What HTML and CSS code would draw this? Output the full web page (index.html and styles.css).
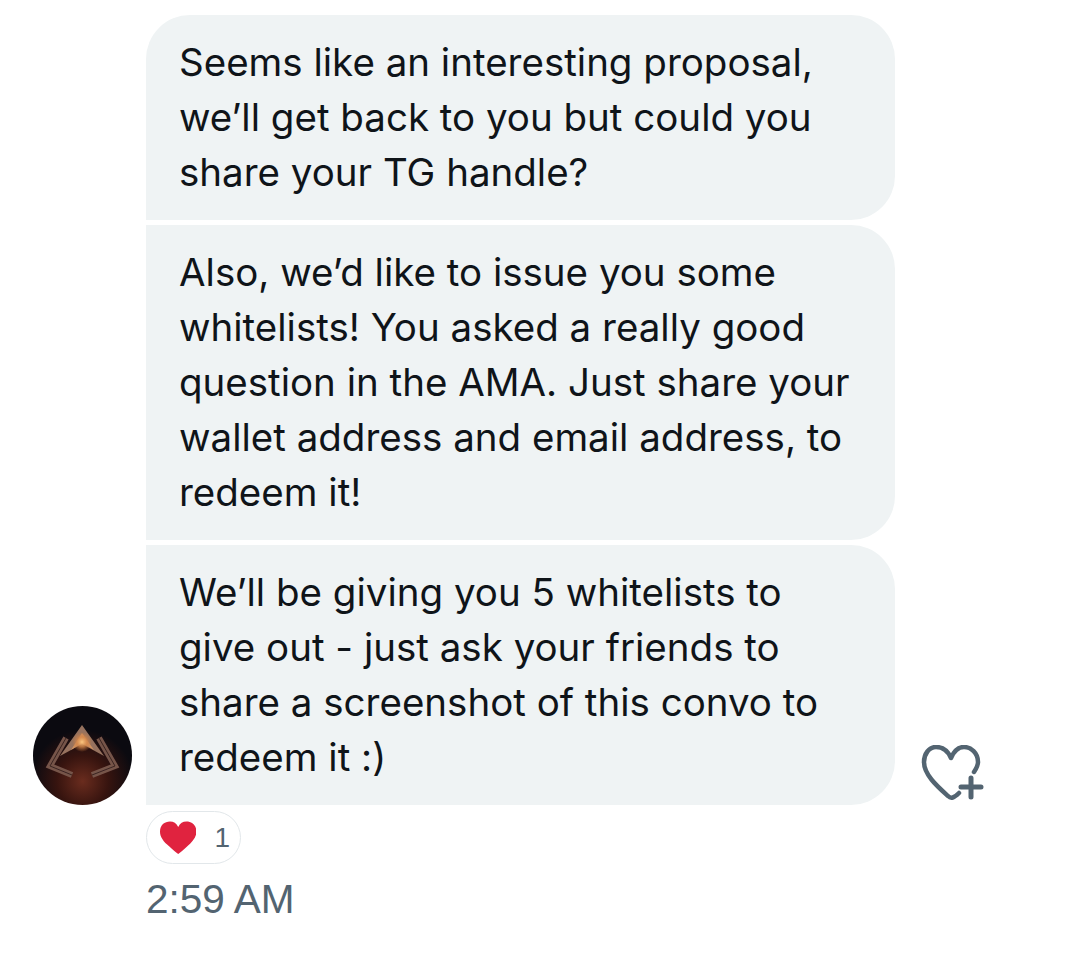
FILE: index.html
```html
<!DOCTYPE html>
<html lang="en">
<head>
    <meta charset="UTF-8">
    <title>Messages</title>
    <link rel="stylesheet" href="styles.css">
</head>
<body>
    <div class="thread">
        <div class="thread__row">
            <svg class="avatar" viewBox="0 0 99 99" aria-hidden="true">
                <defs>
                    <radialGradient id="glow" cx="50%" cy="76%" r="52%">
                        <stop offset="0" stop-color="#6a2c1e"/>
                        <stop offset="0.5" stop-color="#37140f"/>
                        <stop offset="1" stop-color="#0b0a10"/>
                    </radialGradient>
                    <radialGradient id="flare" cx="50%" cy="50%" r="50%">
                        <stop offset="0" stop-color="#fbc680"/>
                        <stop offset="0.5" stop-color="#d5874a" stop-opacity="0.8"/>
                        <stop offset="1" stop-color="#c9793f" stop-opacity="0"/>
                    </radialGradient>
                    <filter id="soft"><feGaussianBlur stdDeviation="0.6"/></filter>
                </defs>
                <circle cx="49.5" cy="49.5" r="49.5" fill="url(#glow)"/>
                <g filter="url(#soft)">
                    <path d="M33 32 L17 60 L39 69" fill="none" stroke="#76544a" stroke-width="6"/>
                    <path d="M66 32 L82 60 L59 69" fill="none" stroke="#76544a" stroke-width="6"/>
                    <path d="M33 32 L17 60 L39 69 M66 32 L82 60 L59 69" fill="none" stroke="#3a2420" stroke-width="1"/>
                    <path d="M49 19 L71 50 L49 38 L27 50 Z" fill="#96725e"/>
                    <path d="M49 27 L61 44 L49 37 L38 44 Z" fill="#cf9160"/>
                    <circle cx="49" cy="36" r="10" fill="url(#flare)"/>
                </g>
            </svg>

            <div class="bubbles">
                <div class="bubble bubble--first">Seems like an interesting proposal,<br>we’ll get back to you but could you<br>share your TG handle?</div>
                <div class="bubble">Also, we’d like to issue you some<br>whitelists! You asked a really good<br>question in the AMA. Just share your<br>wallet address and email address, to<br>redeem it!</div>
                <div class="bubble">We’ll be giving you 5 whitelists to<br>give out - just ask your friends to<br>share a screenshot of this convo to<br>redeem it :)</div>
            </div>

            <!-- add reaction -->
            <svg class="react" viewBox="0 0 66 56" aria-hidden="true">
                <path d="M53 27 C55 24 57 21 57 17 C57 8 50 2 43 2 C37 2 33 6 30 13 C27 6 22 2 15 2 C8 2 3 9 3 17 C3 30 17 42 27 51 C30 54 33 53 38 48" fill="none" stroke="#536471" stroke-width="4.5" stroke-linecap="round" stroke-linejoin="round"/>
                <path d="M50 33 V52 M40 42 H60" fill="none" stroke="#536471" stroke-width="5" stroke-linecap="round"/>
            </svg>
        </div>

        <div class="meta">
            <div class="reaction">
                <svg class="reaction__heart" viewBox="0 0 40 36" aria-hidden="true">
                    <path d="M20 35.5 C18 34 14 31 10 27 C4 22 0 17 0 11 C0 4 5 0 11 0 C15 0 18 2 20 6 C22 2 25 0 29 0 C35 0 40 4 40 11 C40 17 36 22 30 27 C26 31 22 34 20 35.5 Z" fill="#e0233f"/>
                </svg>
                <span class="reaction__count">1</span>
            </div>
            <div class="time">2:59 AM</div>
        </div>
    </div>
</body>
</html>
```
FILE: styles.css
```css
* { box-sizing: border-box; }

body {
  margin: 0;
  background-color: #ffffff;
  font-family: Inter, "Noto Sans", sans-serif;
  color: #0f1419;
}

.thread {
  padding: 15px 0 0 33px;
}

.thread__row {
  display: flex;
  align-items: flex-end;
}

.avatar {
  width: 99px;
  height: 99px;
  margin-right: 14px;
  flex-shrink: 0;
}

.bubbles {
  display: flex;
  flex-direction: column;
  gap: 5px;
  width: 749px;
}

.bubble {
  padding: 20px 33px;
  background-color: #eff3f4;
  border-radius: 0 44px 44px 0;
  font-size: 38.5px;
  line-height: 55px;
  white-space: nowrap;
}

.bubble--first {
  border-top-left-radius: 44px;
}

.react {
  width: 66px;
  height: 56px;
  margin: 0 0 4px 26px;
}

.meta {
  padding: 6px 0 0 113px;
}

.reaction {
  display: inline-flex;
  align-items: center;
  width: 95px;
  height: 53px;
  padding: 0 10px 0 13px;
  border: 1px solid #e2e7ea;
  border-radius: 27px;
}

.reaction__heart {
  width: 40px;
  height: 36px;
}

.reaction__count {
  margin-left: 18px;
  font-family: "Liberation Sans", sans-serif;
  font-size: 28px;
  color: #536471;
}

.time {
  margin-top: 12px;
  font-family: "Liberation Sans", sans-serif;
  font-size: 40.5px;
  line-height: 46px;
  color: #536471;
}
```
